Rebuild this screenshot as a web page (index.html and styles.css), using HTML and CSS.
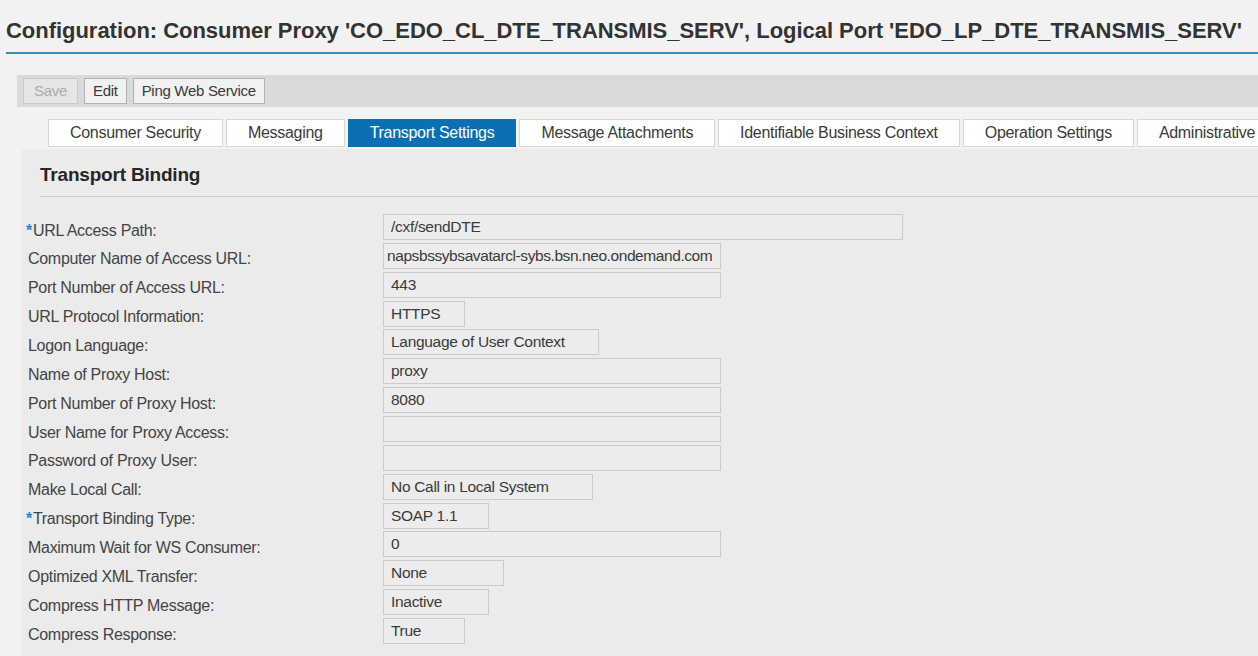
FILE: index.html
```html
<!DOCTYPE html>
<html lang="en">
<head>
<meta charset="utf-8">
<title>Configuration: Consumer Proxy</title>
<link rel="stylesheet" href="styles.css">
</head>
<body>
<div class="page">
  <h1 class="title">Configuration: Consumer Proxy 'CO_EDO_CL_DTE_TRANSMIS_SERV', Logical Port 'EDO_LP_DTE_TRANSMIS_SERV'</h1>

  <div class="toolbar">
    <button class="btn btn-disabled" type="button">Save</button>
    <button class="btn" type="button">Edit</button>
    <button class="btn" type="button">Ping Web Service</button>
  </div>

  <div class="tabs">
    <div class="tab">Consumer Security</div>
    <div class="tab">Messaging</div>
    <div class="tab tab-active">Transport Settings</div>
    <div class="tab">Message Attachments</div>
    <div class="tab">Identifiable Business Context</div>
    <div class="tab">Operation Settings</div>
    <div class="tab">Administrative</div>
  </div>

  <section class="panel">
    <h2 class="panel-title">Transport Binding</h2>
    <div class="form">
      <div class="label"><span class="req">*</span>URL Access Path:</div>
      <div class="field w-xl">/cxf/sendDTE</div>

      <div class="label">Computer Name of Access URL:</div>
      <div class="field w-lg field-tight">napsbssybsavatarcl-sybs.bsn.neo.ondemand.com</div>

      <div class="label">Port Number of Access URL:</div>
      <div class="field w-lg">443</div>

      <div class="label">URL Protocol Information:</div>
      <div class="field w-xs">HTTPS</div>

      <div class="label">Logon Language:</div>
      <div class="field w-md">Language of User Context</div>

      <div class="label">Name of Proxy Host:</div>
      <div class="field w-lg">proxy</div>

      <div class="label">Port Number of Proxy Host:</div>
      <div class="field w-lg">8080</div>

      <div class="label">User Name for Proxy Access:</div>
      <div class="field w-lg"></div>

      <div class="label">Password of Proxy User:</div>
      <div class="field w-lg"></div>

      <div class="label">Make Local Call:</div>
      <div class="field w-md2">No Call in Local System</div>

      <div class="label"><span class="req">*</span>Transport Binding Type:</div>
      <div class="field w-sm">SOAP 1.1</div>

      <div class="label">Maximum Wait for WS Consumer:</div>
      <div class="field w-lg">0</div>

      <div class="label">Optimized XML Transfer:</div>
      <div class="field w-sm2">None</div>

      <div class="label">Compress HTTP Message:</div>
      <div class="field w-sm">Inactive</div>

      <div class="label">Compress Response:</div>
      <div class="field w-xs">True</div>
    </div>
  </section>
</div>
</body>
</html>
```

FILE: styles.css
```css
html, body {
  margin: 0;
  padding: 0;
  overflow: hidden;
}

body {
  background: #f2f2f2;
  color: #333333;
  font-family: "Liberation Sans", Arial, sans-serif;
  font-size: 16px;
  letter-spacing: -0.3px;
}

.page {
  width: 1258px;
  height: 656px;
  overflow: hidden;
}

/* Page title with the teal rule underneath */
.title {
  margin: 0 0 0 6px;
  padding: 18px 0 8px 0;
  font-size: 22px;
  line-height: 26px;
  font-weight: bold;
  letter-spacing: -0.03px;
  color: #333333;
  white-space: nowrap;
  border-bottom: 2px solid #3a8bb0;
}

/* Button bar */
.toolbar {
  display: flex;
  gap: 6px;
  margin: 21px 0 0 17px;
  padding: 3px 6px;
  height: 32px;
  box-sizing: border-box;
  background: #dadada;
}

.btn {
  height: 26px;
  padding: 0 8px;
  margin: 0;
  border: 1px solid #b1b1b1;
  background: #f1f1f1;
  color: #3a3a3a;
  font-family: inherit;
  font-size: 15px;
  letter-spacing: -0.3px;
  line-height: 24px;
  cursor: pointer;
}

.btn-disabled {
  padding: 0 10px;
  color: #ababab;
  border-color: #c9c9c9;
  background: #e6e6e6;
}

/* Tab strip */
.tabs {
  display: flex;
  gap: 3px;
  margin: 12px 0 0 48px;
  white-space: nowrap;
  overflow: hidden;
}

.tab {
  flex-shrink: 0;
  height: 28px;
  box-sizing: border-box;
  padding: 0 21px;
  line-height: 26px;
  background: #ffffff;
  border: 1px solid #d6d6d6;
  color: #3a3a3a;
}

.tab-active {
  background: #0a6fb3;
  border-color: #0a6fb3;
  color: #ffffff;
}

/* Content panel */
.panel {
  margin: 2px 0 0 22px;
  padding: 14px 0 20px 0;
  background: #ebebeb;
  height: 600px;
  box-sizing: border-box;
}

.panel-title {
  margin: 0 0 0 18px;
  padding: 0 0 9px 0;
  font-size: 19px;
  line-height: 24px;
  font-weight: bold;
  letter-spacing: -0.2px;
  color: #262626;
  border-bottom: 1px solid #cfcfcf;
}

.form {
  display: grid;
  grid-template-columns: 355px auto;
  row-gap: 2.86px;
  align-items: center;
  margin-top: 17px;
  padding-left: 6px;
}

.label {
  padding-top: 7px;
  color: #444444;
  white-space: nowrap;
}

.req {
  color: #1f8ad0;
  font-weight: bold;
  margin-left: -2px;
  margin-right: 1px;
}

.field {
  justify-self: start;
  height: 26px;
  box-sizing: border-box;
  padding: 0 7px;
  line-height: 24px;
  background: #ececec;
  border: 1px solid #cbcbcb;
  color: #3a3a3a;
  font-size: 15.5px;
  white-space: nowrap;
  overflow: hidden;
}

/* Long host name that fills the whole box */
.field-tight {
  padding: 0 4px 0 3px;
  letter-spacing: -0.42px;
}

.w-xl { width: 520px; }
.w-lg { width: 338px; }
.w-md { width: 216px; }
.w-md2 { width: 210px; }
.w-sm2 { width: 121px; }
.w-sm { width: 106px; }
.w-xs { width: 82px; }
```
